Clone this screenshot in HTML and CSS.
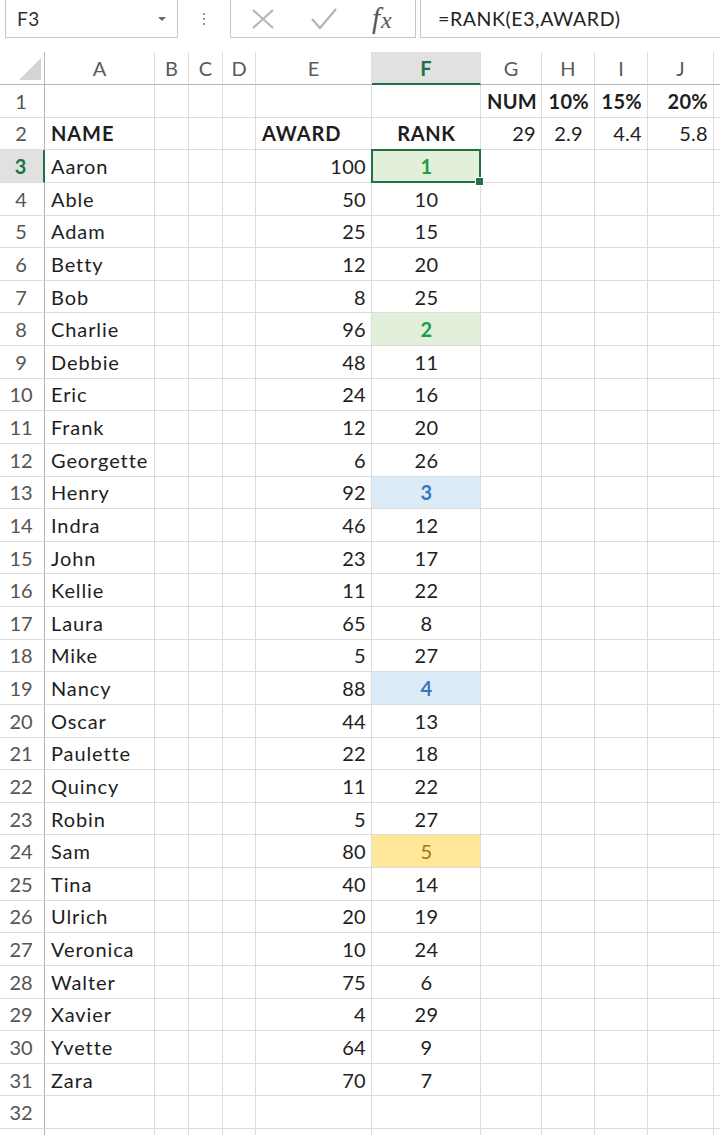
FILE: index.html
```html
<!DOCTYPE html>
<html lang="en">
<head>
<meta charset="utf-8">
<title>RANK</title>
<link rel="stylesheet" href="styles.css">
</head>
<body>
<div class="app">
  <div class="fbar">
    <div class="namebox"><span class="ref">F3</span><span class="caret"></span></div>
    <div class="grip"><i></i><i></i><i></i></div>
    <div class="fbox">
      <div class="fbtns">
        <svg class="ico" width="24" height="20" viewBox="0 0 24 20"><path d="M2 1 L22 19 M22 1 L2 19" stroke="#b4b4b4" stroke-width="2" fill="none"/></svg>
        <svg class="ico" width="26" height="22" viewBox="0 0 26 22"><path d="M1 11 L9 20 L25 1" stroke="#b4b4b4" stroke-width="2.2" fill="none"/></svg>
        <span class="fx"><i>f</i><i>x</i></span>
      </div>
      <div class="finput">=RANK(E3,AWARD)</div>
    </div>
  </div>
  <table class="sheet">
    <colgroup>
      <col class="w-rh"><col class="w-a"><col class="w-b"><col class="w-c"><col class="w-d"><col class="w-e"><col class="w-f"><col class="w-g"><col class="w-h"><col class="w-i"><col class="w-j"><col class="w-k">
    </colgroup>
    <thead>
      <tr><th class="corner"><span class="tri"></span></th><th>A</th><th>B</th><th>C</th><th>D</th><th>E</th><th class="hsel">F</th><th>G</th><th>H</th><th>I</th><th>J</th><th></th></tr>
    </thead>
    <tbody>
      <tr><th>1</th><td></td><td></td><td></td><td></td><td></td><td></td><td class="r b">NUM</td><td class="r b">10%</td><td class="r b">15%</td><td class="r b">20%</td><td></td></tr>
      <tr><th>2</th><td class="b">NAME</td><td></td><td></td><td></td><td class="b">AWARD</td><td class="c b">RANK</td><td class="r">29</td><td class="r pad2">2.9</td><td class="r">4.4</td><td class="r">5.8</td><td></td></tr>
      <tr><th class="rsel">3</th><td>Aaron</td><td></td><td></td><td></td><td class="r">100</td><td class="c top1 active">1</td><td></td><td></td><td></td><td></td><td></td></tr>
      <tr><th>4</th><td>Able</td><td></td><td></td><td></td><td class="r">50</td><td class="c">10</td><td></td><td></td><td></td><td></td><td></td></tr>
      <tr><th>5</th><td>Adam</td><td></td><td></td><td></td><td class="r">25</td><td class="c">15</td><td></td><td></td><td></td><td></td><td></td></tr>
      <tr><th>6</th><td>Betty</td><td></td><td></td><td></td><td class="r">12</td><td class="c">20</td><td></td><td></td><td></td><td></td><td></td></tr>
      <tr><th>7</th><td>Bob</td><td></td><td></td><td></td><td class="r">8</td><td class="c">25</td><td></td><td></td><td></td><td></td><td></td></tr>
      <tr><th>8</th><td>Charlie</td><td></td><td></td><td></td><td class="r">96</td><td class="c top1">2</td><td></td><td></td><td></td><td></td><td></td></tr>
      <tr><th>9</th><td>Debbie</td><td></td><td></td><td></td><td class="r">48</td><td class="c">11</td><td></td><td></td><td></td><td></td><td></td></tr>
      <tr><th>10</th><td>Eric</td><td></td><td></td><td></td><td class="r">24</td><td class="c">16</td><td></td><td></td><td></td><td></td><td></td></tr>
      <tr><th>11</th><td>Frank</td><td></td><td></td><td></td><td class="r">12</td><td class="c">20</td><td></td><td></td><td></td><td></td><td></td></tr>
      <tr><th>12</th><td>Georgette</td><td></td><td></td><td></td><td class="r">6</td><td class="c">26</td><td></td><td></td><td></td><td></td><td></td></tr>
      <tr><th>13</th><td>Henry</td><td></td><td></td><td></td><td class="r">92</td><td class="c top2">3</td><td></td><td></td><td></td><td></td><td></td></tr>
      <tr><th>14</th><td>Indra</td><td></td><td></td><td></td><td class="r">46</td><td class="c">12</td><td></td><td></td><td></td><td></td><td></td></tr>
      <tr><th>15</th><td>John</td><td></td><td></td><td></td><td class="r">23</td><td class="c">17</td><td></td><td></td><td></td><td></td><td></td></tr>
      <tr><th>16</th><td>Kellie</td><td></td><td></td><td></td><td class="r">11</td><td class="c">22</td><td></td><td></td><td></td><td></td><td></td></tr>
      <tr><th>17</th><td>Laura</td><td></td><td></td><td></td><td class="r">65</td><td class="c">8</td><td></td><td></td><td></td><td></td><td></td></tr>
      <tr><th>18</th><td>Mike</td><td></td><td></td><td></td><td class="r">5</td><td class="c">27</td><td></td><td></td><td></td><td></td><td></td></tr>
      <tr><th>19</th><td>Nancy</td><td></td><td></td><td></td><td class="r">88</td><td class="c top2">4</td><td></td><td></td><td></td><td></td><td></td></tr>
      <tr><th>20</th><td>Oscar</td><td></td><td></td><td></td><td class="r">44</td><td class="c">13</td><td></td><td></td><td></td><td></td><td></td></tr>
      <tr><th>21</th><td>Paulette</td><td></td><td></td><td></td><td class="r">22</td><td class="c">18</td><td></td><td></td><td></td><td></td><td></td></tr>
      <tr><th>22</th><td>Quincy</td><td></td><td></td><td></td><td class="r">11</td><td class="c">22</td><td></td><td></td><td></td><td></td><td></td></tr>
      <tr><th>23</th><td>Robin</td><td></td><td></td><td></td><td class="r">5</td><td class="c">27</td><td></td><td></td><td></td><td></td><td></td></tr>
      <tr><th>24</th><td>Sam</td><td></td><td></td><td></td><td class="r">80</td><td class="c top3">5</td><td></td><td></td><td></td><td></td><td></td></tr>
      <tr><th>25</th><td>Tina</td><td></td><td></td><td></td><td class="r">40</td><td class="c">14</td><td></td><td></td><td></td><td></td><td></td></tr>
      <tr><th>26</th><td>Ulrich</td><td></td><td></td><td></td><td class="r">20</td><td class="c">19</td><td></td><td></td><td></td><td></td><td></td></tr>
      <tr><th>27</th><td>Veronica</td><td></td><td></td><td></td><td class="r">10</td><td class="c">24</td><td></td><td></td><td></td><td></td><td></td></tr>
      <tr><th>28</th><td>Walter</td><td></td><td></td><td></td><td class="r">75</td><td class="c">6</td><td></td><td></td><td></td><td></td><td></td></tr>
      <tr><th>29</th><td>Xavier</td><td></td><td></td><td></td><td class="r">4</td><td class="c">29</td><td></td><td></td><td></td><td></td><td></td></tr>
      <tr><th>30</th><td>Yvette</td><td></td><td></td><td></td><td class="r">64</td><td class="c">9</td><td></td><td></td><td></td><td></td><td></td></tr>
      <tr><th>31</th><td>Zara</td><td></td><td></td><td></td><td class="r">70</td><td class="c">7</td><td></td><td></td><td></td><td></td><td></td></tr>
      <tr><th>32</th><td></td><td></td><td></td><td></td><td></td><td></td><td></td><td></td><td></td><td></td><td></td></tr>
      <tr><th></th><td></td><td></td><td></td><td></td><td></td><td></td><td></td><td></td><td></td><td></td><td></td></tr>
    </tbody>
  </table>
</div>
</body>
</html>
```
FILE: styles.css
```css
* { box-sizing: border-box; }

html, body {
  margin: 0;
  padding: 0;
  background: #fff;
  overflow: hidden;
}

.app {
  width: 720px;
  height: 1135px;
  overflow: hidden;
  font-family: Lato, "Open Sans", sans-serif;
  color: #1e1e1e;
}

/* formula bar */
.fbar {
  display: flex;
  align-items: flex-start;
  height: 52px;
}

.namebox {
  margin-left: 5px;
  width: 173px;
  height: 38px;
  border: 1px solid #c6c6c6;
  border-top: none;
  display: flex;
  align-items: center;
  justify-content: space-between;
  padding: 0 11px 0 11px;
  font-size: 19px;
  letter-spacing: 0.5px;
  color: #333;
}

.caret {
  width: 0;
  height: 0;
  border-left: 4px solid transparent;
  border-right: 4px solid transparent;
  border-top: 4px solid #6a6a6a;
}

.grip {
  width: 52px;
  height: 38px;
  display: flex;
  flex-direction: column;
  align-items: center;
  justify-content: center;
  gap: 3px;
}
.grip i {
  width: 2px;
  height: 2px;
  background: #9a9a9a;
}

.fbox {
  flex: 1;
  display: flex;
  height: 38px;
}

.fbtns {
  width: 186px;
  height: 38px;
  border-left: 1px solid #c6c6c6;
  border-right: 1px solid #c6c6c6;
  border-bottom: 1px solid #c6c6c6;
  display: flex;
  align-items: center;
  padding-left: 20px;
  gap: 36px;
}

.fx {
  font-family: "Liberation Serif", serif;
  font-style: italic;
  font-size: 29px;
  color: #555;
  margin-left: -1px;
  line-height: 1;
}
.fx i { font-style: italic; }
.fx i + i { font-size: 24px; margin-left: 1px; }

.finput {
  flex: 1;
  margin-left: 4px;
  height: 38px;
  border-left: 1px solid #c6c6c6;
  border-bottom: 1px solid #c6c6c6;
  display: flex;
  align-items: center;
  padding-left: 17px;
  font-size: 19.5px;
  letter-spacing: 0.6px;
  color: #222;
}

/* grid */
.sheet {
  table-layout: fixed;
  width: 774px;
  border-collapse: separate;
  border-spacing: 0;
  font-size: 20px;
}

.w-rh { width: 45px; }
.w-a { width: 110px; }
.w-b { width: 34px; }
.w-c { width: 34px; }
.w-d { width: 33px; }
.w-e { width: 116px; }
.w-f { width: 109px; }
.w-g { width: 61px; }
.w-h { width: 53px; }
.w-i { width: 53px; }
.w-j { width: 66px; }
.w-k { width: 60px; }

thead tr { height: 33px; }
tbody tr { height: 32.625px; }

thead th {
  font-weight: normal;
  color: #5a5a5a;
  text-align: center;
  vertical-align: middle;
  border-right: 1px solid #dcdcdc;
  border-bottom: 1px solid #b5b5b5;
  padding: 0;
}

thead th.corner {
  position: relative;
  border-right: 1px solid #b5b5b5;
}
.tri {
  position: absolute;
  right: 3px;
  bottom: 4px;
  width: 0;
  height: 0;
  border-left: 22px solid transparent;
  border-bottom: 22px solid #d4d4d4;
}

thead th.hsel {
  background: #e1e1e1;
  color: #217346;
  font-weight: bold;
  border-bottom: 2px solid #217346;
}

tbody th {
  font-weight: normal;
  color: #555;
  text-align: center;
  vertical-align: middle;
  padding: 0 2px 0 0;
  border-right: 1px solid #b5b5b5;
  border-bottom: 1px solid #dcdcdc;
}

tbody th.rsel {
  background: #e1e1e1;
  color: #217346;
  font-weight: bold;
  border-right: 2px solid #217346;
}

td {
  border-right: 1px solid #dcdcdc;
  border-bottom: 1px solid #dcdcdc;
  padding: 0 5px 0 6px;
  white-space: nowrap;
  overflow: visible;
  vertical-align: middle;
  line-height: 1;
  letter-spacing: 0.9px;
}

td.r { text-align: right; letter-spacing: 0.3px; }
td.c { text-align: center; letter-spacing: 0.3px; }
td.b { font-weight: bold; }
td.c.b { letter-spacing: 0.6px; }
td.pad2 { padding-right: 11px; }

td.top1 { background: #e2efda; color: #1e9e44; font-weight: bold; }
td.top2 { background: #ddebf7; color: #3b78c1; font-weight: bold; }
td.top3 { background: #ffe699; color: #9a7618; }

td.active { position: relative; }
td.active::after {
  content: "";
  position: absolute;
  left: -1px;
  top: -1px;
  right: -1px;
  bottom: -1px;
  border: 2px solid #217346;
}
td.active::before {
  content: "";
  position: absolute;
  right: -4px;
  bottom: -4px;
  width: 7px;
  height: 7px;
  background: #217346;
  border: 1px solid #fff;
  z-index: 1;
}
```
